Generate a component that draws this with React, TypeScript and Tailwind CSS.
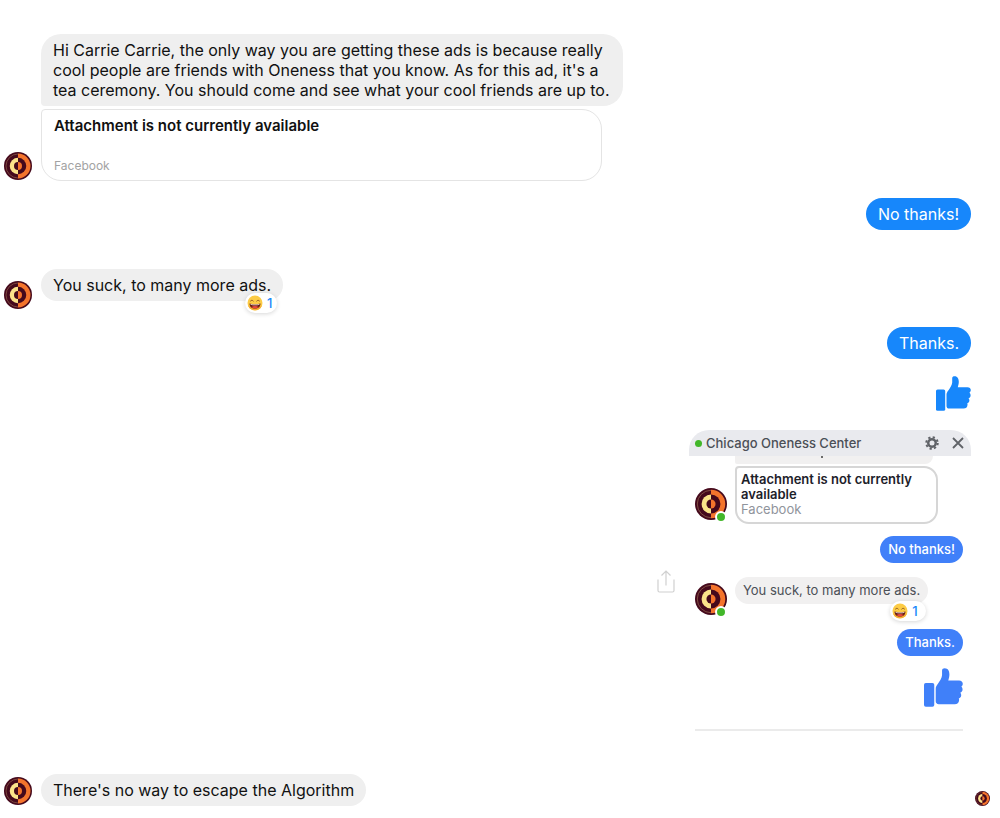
import { FC, ReactNode } from "react";

const Logo: FC<{ className: string }> = ({ className }) => (
  <svg viewBox="0 0 56 56" className={`shrink-0 ${className}`} role="img" aria-label="Chicago Oneness Center">
    <circle cx="28" cy="28" r="28" fill="#45091c" />
    <path d="M28 3a25 25 0 0 1 0 50z" fill="#f4742c" />
    <path d="M28 4a24 24 0 0 0 0 48" fill="none" stroke="#8a5a48" strokeWidth="1.5" />
    <path d="M28 11.500a16.500 16.500 0 0 0 0 33z" fill="#fbe38a" />
    <path d="M28 11.500a16.500 16.500 0 0 1 0 33z" fill="#45091c" />
    <path d="M28 20a8 8 0 0 0 0 16z" fill="#45091c" />
    <path d="M28 20a8 8 0 0 1 0 16z" fill="#f4742c" />
  </svg>
);

const ThumbsUp: FC<{ className: string }> = ({ className }) => (
  <svg viewBox="0 0 35 35" className={className} fill="currentColor" role="img" aria-label="Thumbs up">
    <rect x="0" y="13.5" width="9.2" height="21.3" rx="1.6" />
    <path d="M12.500 14.200C14 11.600 16 9.400 16.200 6.400V2.200C16.200.8 17.200.2 18.600.2c3 0 4.200 2.600 4.200 5.600 0 2-.5 3.600-1 5.400h9.700c2 0 3.300 1.300 3.300 2.900 0 1.200-.6 2.100-1.400 2.600.7.600 1.200 1.500 1.200 2.700 0 1.500-.9 2.500-2.100 2.900.6.600.9 1.300.9 2.100 0 1.500-1 2.500-2.200 2.900.3.500.4 1 .3 1.600-.2 2.200-1.600 3.600-3.900 3.600H13.300c-1.800 0-2.800-1-2.800-2.600V18.600c0-1.700.8-2.800 2-4.400z" />
  </svg>
);

const Laugh: FC = () => (
  <svg viewBox="0 0 32 32" className="size-4" aria-hidden="true">
    <circle cx="16" cy="16" r="15" fill="#fccb45" />
    <path d="M2 21a15 15 0 0 0 28 0c-7 5-21 5-28 0z" fill="#f6ad35" />
    <path d="M7 12c1.500-2 4-2 5.500 0M19.500 12c1.500-2 4-2 5.500 0" fill="none" stroke="#8a5220" strokeWidth="1.800" strokeLinecap="round" />
    <path d="M5 17c6 2 16 2 22 0 0 6-4 10-11 10S5 23 5 17z" fill="#6b1f14" />
    <path d="M7 18c5 1.500 13 1.500 18 0l-.5 1.500c-5 1.500-12 1.500-17 0z" fill="#fff" />
    <path d="M9 24c4-2.500 10-2.500 14 0-3 3.500-11 3.500-14 0z" fill="#e8453c" />
  </svg>
);

const Reaction: FC<{ className: string }> = ({ className }) => (
  <button
    className={`absolute flex items-center gap-1 rounded-full bg-white pl-0.5 pr-1 text-[13px] font-medium text-[#1787fb] shadow-[0_1px_4px_rgba(0,0,0,0.16)] ${className}`}
  >
    <Laugh />
    <span>1</span>
  </button>
);

const Sent: FC<{ children: ReactNode }> = ({ children }) => (
  <p className="self-end rounded-2xl bg-[#1787fb] px-3 py-1.5 text-white">{children}</p>
);

const OnlineLogo: FC = () => (
  <div className="relative shrink-0">
    <Logo className="size-8" />
    <span className="absolute right-0 -bottom-[3px] size-3 rounded-full border-2 border-white bg-[#42b72a]" />
  </div>
);

const ChatWindow: FC = () => (
  <section className="flex h-[303px] w-[282px] flex-col overflow-hidden rounded-t-[20px] text-[13px] leading-[15px]">
    <header className="flex h-[26px] shrink-0 items-center bg-[#e9eaee] pl-1.5 pr-1.5 text-[#4b4f56]">
      <span className="mr-1 size-[7px] rounded-full bg-[#42b72a]" />
      <h2 className="flex-1 font-medium">Chicago Oneness Center</h2>
      <button aria-label="Settings" className="mr-3">
        <svg viewBox="0 0 28 28" className="size-3.5" fill="none" stroke="#606368">
          <circle cx="14" cy="14" r="7.500" strokeWidth="5" />
          <circle cx="14" cy="14" r="11.500" strokeWidth="4" strokeDasharray="4.500 4.530" />
        </svg>
      </button>
      <button aria-label="Close">
        <svg viewBox="0 0 14 14" className="size-3.5" fill="none" stroke="#606368" strokeWidth="1.800">
          <path d="M2 2l10 10M12 2L2 12" />
        </svg>
      </button>
    </header>
    <div className="flex flex-1 flex-col pl-1.5 pr-2">
      <div className="ml-10 mr-[30px] h-2 shrink-0 rounded-bl-sm rounded-br-2xl bg-[#f1f0f0]">
        <div className="ml-[86px] h-0.5 w-0.5 bg-[#6b6b6b]" />
      </div>
      <div className="mt-0.5 flex items-end gap-2">
        <div className="mb-1">
          <OnlineLogo />
        </div>
        <article className="h-[58px] w-[203px] rounded-[14px] rounded-tl-sm border-2 border-[#d6d6d6] px-1 py-1">
          <h3 className="font-semibold text-[#1d2129]">Attachment is not currently available</h3>
          <p className="text-[#90949c]">Facebook</p>
        </article>
      </div>
      <p className="mt-3 self-end rounded-[14px] bg-[#4080f9] px-2 py-1.5 font-medium text-white">No thanks!</p>
      <div className="mt-3.5 flex items-start gap-2">
        <div className="mt-1.5">
          <OnlineLogo />
        </div>
        <div className="relative rounded-[14px] bg-[#f1f0f0] px-2 py-1.5 text-[#4b4f56]">
          You suck, to many more ads.
          <Reaction className="right-0.5 top-6 h-5 w-9" />
        </div>
      </div>
      <p className="mt-3.5 self-end rounded-[14px] bg-[#4080f9] px-2 py-1.5 font-medium text-white">Thanks.</p>
      <ThumbsUp className="mt-3 size-[39px] shrink-0 self-end text-[#4080f9]" />
      <hr className="mt-auto mb-0.5 border-t-2 border-[#ebebeb]" />
    </div>
  </section>
);

export default function App() {
  return (
    <main className="flex flex-col bg-white pt-[34px] pb-3 pl-1 pr-[29px] font-['Inter',sans-serif] text-base leading-5 text-[#111]">
      <div className="flex items-end gap-[9px]">
        <Logo className="mb-px size-7" />
        <div>
          <p className="max-w-[582px] rounded-[20px] rounded-bl-sm bg-[#efefef] px-3 py-1.5">
            Hi Carrie Carrie, the only way you are getting these ads is because really cool people are friends with
            Oneness that you know. As for this ad, it's a tea ceremony. You should come and see what your cool friends
            are up to.
          </p>
          <article className="mt-[3px] h-[72px] max-w-[561px] rounded-[20px] rounded-tl-sm border border-[#e4e4e4] px-3 py-1.5">
            <h2 className="text-[15px] font-semibold">Attachment is not currently available</h2>
            <p className="mt-5 text-xs leading-5 text-[#a3a3a3]">Facebook</p>
          </article>
        </div>
      </div>

      <div className="mt-[17px] flex flex-col">
        <Sent>No thanks!</Sent>
      </div>

      <div className="mt-[39px] flex items-end gap-[9px]">
        <Logo className="size-7" />
        <div className="relative mb-2 rounded-2xl bg-[#efefef] px-3 py-1.5">
          You suck, to many more ads.
          <Reaction className="right-1.5 top-6 h-5 w-8" />
        </div>
      </div>

      <div className="mt-[18px] flex flex-col">
        <Sent>Thanks.</Sent>
        <ThumbsUp className="mt-[17px] size-[35px] self-end text-[#1787fb]" />
        <div className="mt-[19px] flex items-center gap-3.5 self-end">
          <button aria-label="Share">
            <svg viewBox="0 0 18 23" className="h-[23px] w-[18px]" fill="none" stroke="#d0d0d0" strokeWidth="1.200">
              <path d="M1 9.500v11q0 1.500 1.500 1.500h13q1.500 0 1.500-1.500v-11M9 15.500V1.500M4.500 5.500L9 1l4.500 4.500" />
            </svg>
          </button>
          <ChatWindow />
        </div>
      </div>

      <div className="-mr-[19px] mt-[41px] flex items-center gap-[9px]">
        <Logo className="mt-px size-7" />
        <p className="rounded-2xl bg-[#efefef] px-3 py-1.5">There's no way to escape the Algorithm</p>
        <Logo className="ml-auto mt-4 size-[15px]" />
      </div>
    </main>
  );
}
